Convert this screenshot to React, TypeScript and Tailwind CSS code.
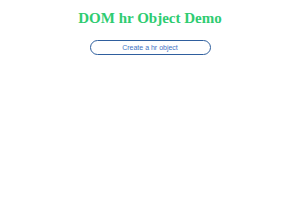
export default function App() {
  return (
    <div className="min-h-[210px] bg-white flex flex-col items-center pt-[8px]">
      <h1 className="font-['Liberation_Serif',serif] font-bold text-[15px] leading-[20px] text-[#2ecc71]">
        DOM hr Object Demo
      </h1>
      <button className="mt-[12px] w-[121px] h-[15px] rounded-full border border-[#2f5f9e] bg-white font-['Liberation_Sans',sans-serif] text-[7px] leading-none text-[#3f73c4]">
        Create a hr object
      </button>
    </div>
  );
}
